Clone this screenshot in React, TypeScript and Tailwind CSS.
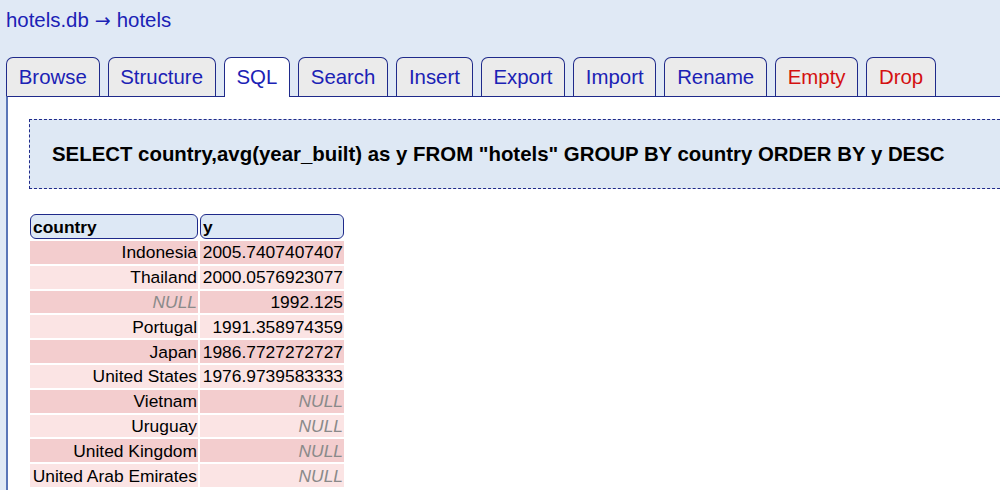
import React from "react";

const tabs: { label: string; red?: boolean; active?: boolean }[] = [
  { label: "Browse" },
  { label: "Structure" },
  { label: "SQL", active: true },
  { label: "Search" },
  { label: "Insert" },
  { label: "Export" },
  { label: "Import" },
  { label: "Rename" },
  { label: "Empty", red: true },
  { label: "Drop", red: true },
];

const rows: [string | null, string | null][] = [
  ["Indonesia", "2005.7407407407"],
  ["Thailand", "2000.0576923077"],
  [null, "1992.125"],
  ["Portugal", "1991.358974359"],
  ["Japan", "1986.7727272727"],
  ["United States", "1976.9739583333"],
  ["Vietnam", null],
  ["Uruguay", null],
  ["United Kingdom", null],
  ["United Arab Emirates", null],
];

function Cell({ v, odd }: { v: string | null; odd: boolean }) {
  return (
    <td
      className={`${odd ? "bg-[#f3cdce]" : "bg-[#fbe4e4]"} h-[22.8px] p-0 pr-[1px] text-right leading-[22px] whitespace-nowrap`}
    >
      {v === null ? <span className="italic text-[#8a8a8a]">NULL</span> : v}
    </td>
  );
}

export default function App() {
  return (
    <div
      className="h-[490px] w-[1000px] overflow-hidden bg-[#e0e9f5]"
      style={{ fontFamily: '"Liberation Sans", Arial, sans-serif' }}
    >
      <div className="pl-[6px] pt-[8px] text-[20.4px] leading-[24px] text-[#1b22b5]">
        <span>hotels.db</span>
        <span className="font-['DejaVu_Sans'] text-[19px]"> → </span>
        <span>hotels</span>
      </div>
      <div className="mt-[25px] flex items-end gap-[8px] pl-[6px]">
        {tabs.map((t) => (
          <div
            key={t.label}
            className={`rounded-t-[7px] border border-b-0 border-[#1f2a8a] px-[11.75px] text-[20.4px] leading-[38px] ${
              t.active ? "relative z-10 mb-[-1px] h-[40px] bg-white" : "h-[39px] bg-[#ebebeb]"
            } ${t.red ? "text-[#d41010]" : "text-[#1b22b5]"}`}
          >
            {t.label}
          </div>
        ))}
      </div>
      <div className="ml-[6px] h-[400px] border-l-2 border-t border-l-[#5a76b8] border-t-[#1f2a8a] bg-white">
        <div className="ml-[21px] mr-[-30px] mt-[22px] flex h-[70px] items-center border border-dashed border-[#1f2a8a] bg-[#dee8f4] pl-[22px] text-[20.4px] font-bold text-black">
          SELECT country,avg(year_built) as y FROM "hotels" GROUP BY country ORDER BY y DESC
        </div>
        <table className="ml-[20px] mt-[23px] border-separate border-spacing-[2px] text-[17.4px] text-black">
          <thead>
            <tr>
              <th className="h-[25px] w-[168px] rounded-[6px] border border-[#1f2a8a] bg-[#dde8f5] p-0 pl-[2px] text-left font-bold leading-[22px]">
                country
              </th>
              <th className="h-[25px] w-[144px] rounded-[6px] border border-[#1f2a8a] bg-[#dde8f5] p-0 pl-[2px] text-left font-bold leading-[22px]">
                y
              </th>
            </tr>
          </thead>
          <tbody>
            {rows.map((r, i) => (
              <tr key={i}>
                <Cell v={r[0]} odd={i % 2 === 0} />
                <Cell v={r[1]} odd={i % 2 === 0} />
              </tr>
            ))}
          </tbody>
        </table>
      </div>
    </div>
  );
}
